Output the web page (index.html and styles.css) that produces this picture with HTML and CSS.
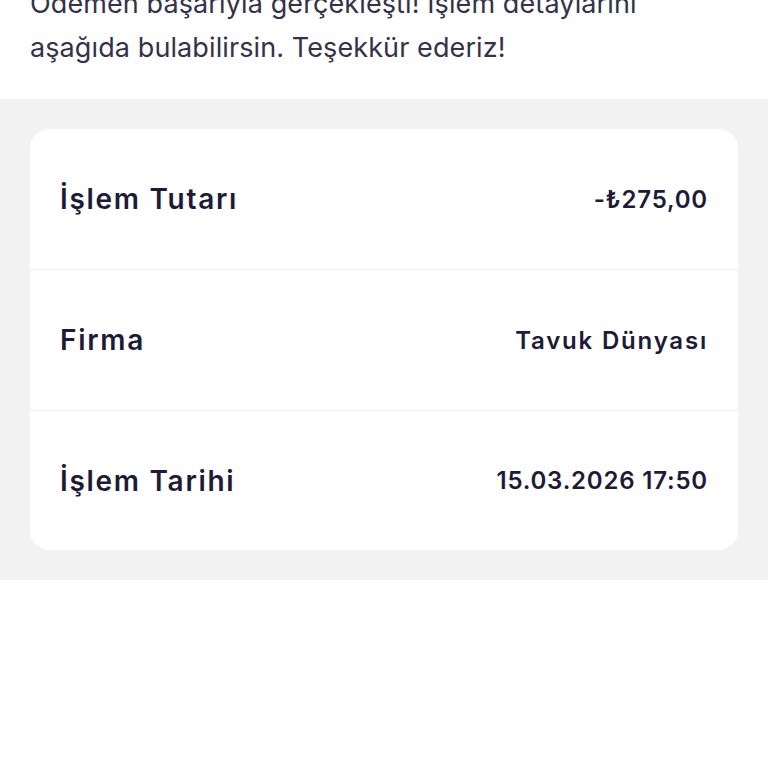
FILE: index.html
```html
<!DOCTYPE html>
<html lang="tr">
<head>
<meta charset="utf-8">
<link rel="stylesheet" href="styles.css">
</head>
<body>
<div class="page">
  <section class="intro">
    <p class="intro-text">Ödemen başarıyla gerçekleşti! İşlem detaylarını aşağıda bulabilirsin. Teşekkür ederiz!</p>
  </section>
  <section class="details">
    <div class="card">
      <div class="row">
        <span class="label">İşlem Tutarı</span>
        <span class="value">-₺275,00</span>
      </div>
      <div class="row">
        <span class="label">Firma</span>
        <span class="value value-name">Tavuk Dünyası</span>
      </div>
      <div class="row">
        <span class="label">İşlem Tarihi</span>
        <span class="value">15.03.2026 17:50</span>
      </div>
    </div>
  </section>
</div>
</body>
</html>
```

FILE: styles.css
```css
html, body {
  margin: 0;
  padding: 0;
  background: #ffffff;
}
body {
  font-family: "Inter", "Noto Sans", sans-serif;
  color: #1d1b38;
}
.page {
  margin-top: -18px;
}
.intro {
  padding: 0 30px 29px;
}
.intro-text {
  margin: 0;
  font-size: 27px;
  font-weight: 400;
  line-height: 44px;
  letter-spacing: 0.1px;
  color: #34324a;
  max-width: 650px;
}
.details {
  background: #f2f2f2;
  padding: 30px;
}
.card {
  background: #ffffff;
  border-radius: 20px;
  display: flex;
  flex-direction: column;
}
.row {
  height: 141px;
  box-sizing: border-box;
  display: flex;
  align-items: center;
  justify-content: space-between;
  padding: 0 30px;
  border-bottom: 1px solid #f1f1f3;
}
.row:last-child {
  border-bottom: none;
  height: 139px;
}
.label {
  font-size: 28px;
  font-weight: 600;
  letter-spacing: 1.7px;
  color: #1d1b38;
}
.value {
  font-size: 24px;
  font-weight: 600;
  letter-spacing: 0.8px;
  color: #1d1b38;
}
.value-name {
  letter-spacing: 1.8px;
}
```
